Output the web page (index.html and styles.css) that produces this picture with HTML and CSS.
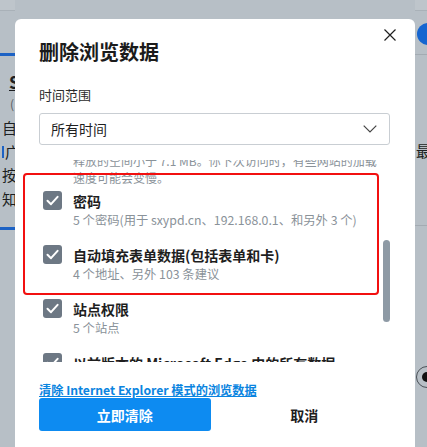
FILE: index.html
```html
<!DOCTYPE html>
<html lang="zh-CN">

<head>
	<meta charset="UTF-8">
	<title>删除浏览数据</title>
	<meta name="viewport" content="width=device-width">
	<link rel="stylesheet" href="styles.css">
</head>

<body>
	<div class="backdrop">
		<div class="side side-left">
			<div class="topbar"></div>
			<div class="blue-rule"></div>
			<p class="bg-heading">S</p>
			<p class="bg-note">(</p>
			<ul class="bg-list">
				<li>自</li>
				<li><span class="bg-mark"></span>广</li>
				<li>按</li>
				<li>知</li>
			</ul>
			<div class="blue-rule low"></div>
		</div>
		<div class="middle"></div>
		<div class="side side-right">
			<div class="topbar"></div>
			<div class="pill"></div>
			<div class="grey-rule"></div>
			<p class="bg-right-text">最</p>
			<div class="grey-rule low"></div>
			<div class="radio"><span></span></div>
		</div>
	</div>

	<section class="dialog" role="dialog" aria-labelledby="dlgTitle">
		<button class="close" aria-label="关闭">
			<svg width="12" height="12" viewBox="0 0 12 12">
				<path d="M0.5 0.5 L11.5 11.5 M11.5 0.5 L0.5 11.5" stroke="#1f1f1f" stroke-width="1.2" fill="none" />
			</svg>
		</button>
		<h2 class="title" id="dlgTitle">删除浏览数据</h2>
		<label class="fieldLabel" for="range">时间范围</label>
		<div class="select" id="range">
			<span>所有时间</span>
			<svg width="14" height="8" viewBox="0 0 14 8">
				<path d="M0.7 0.7 L7 7 L13.3 0.7" stroke="#444" stroke-width="1.2" fill="none" />
			</svg>
		</div>

		<div class="scroll">
			<div class="scrollInner">
				<p class="prevDesc">释放的空间小于 7.1 MB。你下次访问时，有些网站的加载<br>速度可能会变慢。</p>

				<div class="option">
					<span class="check"><svg width="19" height="19" viewBox="0 0 19 19">
							<path d="M4.5 9.8 L8 13.2 L14.6 5.8" stroke="#fff" stroke-width="2" fill="none" stroke-linecap="round" stroke-linejoin="round" />
						</svg></span>
					<div class="optionText">
						<div class="optionTitle">密码</div>
						<div class="optionSub">5 个密码(用于 sxypd.cn、192.168.0.1、和另外 3 个)</div>
					</div>
				</div>

				<div class="option">
					<span class="check"><svg width="19" height="19" viewBox="0 0 19 19">
							<path d="M4.5 9.8 L8 13.2 L14.6 5.8" stroke="#fff" stroke-width="2" fill="none" stroke-linecap="round" stroke-linejoin="round" />
						</svg></span>
					<div class="optionText">
						<div class="optionTitle">自动填充表单数据(包括表单和卡)</div>
						<div class="optionSub">4 个地址、另外 103 条建议</div>
					</div>
				</div>

				<div class="option">
					<span class="check"><svg width="19" height="19" viewBox="0 0 19 19">
							<path d="M4.5 9.8 L8 13.2 L14.6 5.8" stroke="#fff" stroke-width="2" fill="none" stroke-linecap="round" stroke-linejoin="round" />
						</svg></span>
					<div class="optionText">
						<div class="optionTitle">站点权限</div>
						<div class="optionSub">5 个站点</div>
					</div>
				</div>

				<div class="option">
					<span class="check"><svg width="19" height="19" viewBox="0 0 19 19">
							<path d="M4.5 9.8 L8 13.2 L14.6 5.8" stroke="#fff" stroke-width="2" fill="none" stroke-linecap="round" stroke-linejoin="round" />
						</svg></span>
					<div class="optionText">
						<div class="optionTitle">以前版本的 Microsoft Edge 中的所有数据</div>
						<div class="optionSub">包括历史记录、收藏夹、密码等</div>
					</div>
				</div>
			</div>
			<div class="thumb"></div>
		</div>

		<a class="ieLink" href="#">清除 Internet Explorer 模式的浏览数据</a>

		<div class="actions">
			<button class="btn primary">立即清除</button>
			<button class="btn">取消</button>
		</div>

		<!-- annotation box drawn over the list -->
		<div class="highlight"></div>
	</section>
</body>

</html>
```

FILE: styles.css
```css
html,
body {
	margin: 0;
	height: 100%;
}

body {
	background: #b7bfc6;
	font-family: "Noto Sans CJK SC", "Noto Sans", sans-serif;
	overflow: hidden;
	position: relative;
}

/* dimmed page behind the dialog */
.backdrop {
	display: flex;
	height: 447px;
}

.side {
	overflow: hidden;
	white-space: nowrap;
	color: #1d1f22;
}

.side-left {
	width: 15px;
}

.middle {
	flex: 1;
}

.side-right {
	width: 12px;
}

.topbar {
	height: 10px;
	background: #bec5cb;
	border-bottom: 1px solid #a9b1b8;
}

.blue-rule {
	height: 3px;
	margin-top: 42px;
	background: #1d62c4;
}

.blue-rule.low {
	margin-top: 17px;
}

.bg-heading {
	margin: 16px 0 0 9px;
	font-size: 17px;
	font-weight: bold;
	line-height: 20px;
	text-decoration: underline;
}

.bg-note {
	margin: 4px 0 0 10px;
	font-size: 12px;
	line-height: 16px;
	color: #555b61;
}

.bg-list {
	list-style: none;
	margin: 4px 0 0;
	padding: 0;
	font-size: 15px;
	line-height: 23.5px;
}

.bg-list li {
	padding-left: 2px;
}

.bg-mark {
	display: inline-block;
	width: 2px;
	height: 12px;
	margin-right: 1px;
	background: #1d62c4;
}

.pill {
	width: 30px;
	height: 22px;
	margin: 12px 0 0 2px;
	border-radius: 11px;
	background: #1565d0;
}

.grey-rule {
	height: 1px;
	margin-top: 9px;
	background: #a3abb2;
}

.grey-rule.low {
	margin-top: 64px;
}

.bg-right-text {
	margin: 86px 0 0 1px;
	font-size: 15px;
	line-height: 20px;
}

.radio {
	width: 20px;
	height: 20px;
	margin: 140px 0 0 1px;
	border: 1px solid #4a5057;
	border-radius: 50%;
	display: flex;
	align-items: center;
	justify-content: center;
}

.radio span {
	width: 10px;
	height: 10px;
	border-radius: 50%;
	background: #111;
}

/* dialog */
.dialog {
	position: absolute;
	left: 15px;
	top: 19px;
	width: 400px;
	height: 460px;
	box-sizing: border-box;
	padding: 19px 25px 0 24px;
	background: #fff;
	border-radius: 6px;
}

.close {
	position: absolute;
	left: 369px;
	top: 10px;
	width: 12px;
	height: 12px;
	padding: 0;
	border: 0;
	background: none;
	display: flex;
}

.title {
	margin: 0;
	font-size: 20px;
	line-height: 28px;
	font-weight: bold;
	color: #1b1b1b;
}

.fieldLabel {
	display: block;
	margin-top: 19px;
	font-size: 13px;
	line-height: 20px;
	color: #2b2b2b;
}

.select {
	margin-top: 8px;
	height: 32px;
	box-sizing: border-box;
	border: 1px solid #c9ced3;
	border-radius: 3px;
	padding: 0 12px 0 11px;
	display: flex;
	align-items: center;
	justify-content: space-between;
	font-size: 14px;
	color: #1f1f1f;
}

.scroll {
	position: relative;
	margin-top: 15px;
	height: 202px;
	overflow: hidden;
}

.scrollInner {
	margin-top: -8px;
}

.prevDesc {
	margin: 0 0 5px 34px;
	font-size: 12px;
	line-height: 17px;
	color: #8a9299;
	white-space: nowrap;
}

.option {
	display: flex;
	gap: 11px;
	padding-left: 4px;
	margin-bottom: 16px;
}

.check {
	flex: none;
	width: 19px;
	height: 19px;
	border-radius: 3px;
	background: #6d7884;
	display: flex;
}

.optionTitle {
	font-size: 14px;
	line-height: 20px;
	font-weight: bold;
	color: #1e1e1e;
	white-space: nowrap;
}

.optionSub {
	font-size: 12.3px;
	line-height: 18px;
	color: #8a9299;
	white-space: nowrap;
}

.thumb {
	position: absolute;
	right: 0;
	top: 80px;
	width: 7px;
	height: 82px;
	border-radius: 4px;
	background: #8e9aa5;
}

.ieLink {
	display: block;
	margin-top: 20px;
	font-size: 12.2px;
	line-height: 16px;
	font-weight: bold;
	color: #0a84e0;
	text-decoration: underline;
}

.actions {
	display: flex;
	gap: 8px;
}

.btn {
	flex: 1;
	height: 33px;
	border: 0;
	border-radius: 3px;
	background: transparent;
	font-family: inherit;
	font-size: 14px;
	font-weight: bold;
	color: #1e1e1e;
}

.btn.primary {
	background: #0d8bf1;
	color: #fff;
}

.highlight {
	position: absolute;
	left: 8px;
	top: 154px;
	width: 356px;
	height: 122px;
	box-sizing: border-box;
	border: 2px solid #f21010;
	border-radius: 4px;
	pointer-events: none;
}
```
